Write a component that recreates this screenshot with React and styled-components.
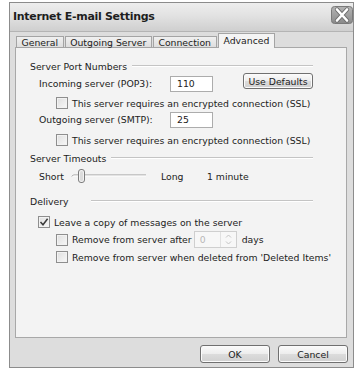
import React from "react";
import styled, { createGlobalStyle } from "styled-components";

const Global = createGlobalStyle`
  html, body { margin: 0; padding: 0; background: #ffffff; }
  body { font-family: "DejaVu Sans", Verdana, sans-serif; }
`;

const Window = styled.div`
  margin: 2px 0 0 9px;
  width: 345px;
  height: 366px;
  box-sizing: border-box;
  border: 1px solid #8c8c8c;
  background: #dddddd;
  display: flex;
  flex-direction: column;
`;

const TitleBar = styled.div`
  height: 28px;
  flex: none;
  display: flex;
  align-items: center;
  justify-content: space-between;
  padding: 0 0 0 3px;
  background: linear-gradient(#eeeeee 0%, #e2e2e2 45%, #cfcfcf 100%);
  border-bottom: 1px solid #b4b4b4;
`;

const Title = styled.div`
  font-family: "DejaVu Sans", Verdana, sans-serif;
  font-weight: bold;
  font-size: 11px;
  letter-spacing: -0.3px;
  color: #1e1e1e;
  margin-top: -2px;
`;

const CloseBtn = styled.div`
  width: 22px;
  height: 18px;
  align-self: flex-start;
  margin-top: 3px;
  display: flex;
`;

const Body = styled.div`
  flex: 1;
  display: flex;
  flex-direction: column;
  padding: 2px 6px 4px 5px;
`;

const Tabs = styled.div`
  display: flex;
  align-items: flex-end;
  gap: 1px;
  padding-left: 1px;
  height: 14px;
  position: relative;
  z-index: 1;
  margin-bottom: -1px;
`;

const Tab = styled.div`
  height: ${(p) => (p.$active ? "15px" : "12px")};
  box-sizing: border-box;
  padding: ${(p) => (p.$active ? "1px 5px 0" : "0 4.5px")};
  font-size: 9.3px;
  line-height: 11px;
  color: #222;
  border: 1px solid #a4a4a4;
  border-bottom: ${(p) => (p.$active ? "none" : "1px solid #a4a4a4")};
  background: ${(p) => (p.$active ? "#f4f4f4" : "linear-gradient(#f0f0f0, #dedede)")};
  white-space: nowrap;
`;

const Panel = styled.div`
  flex: 1;
  border: 1px solid #a8a8a8;
  background: #f3f3f3;
  padding: 11px 0 0 14px;
  display: flex;
  flex-direction: column;
  font-size: 9.3px;
  color: #222;
`;

const GroupHeader = styled.div`
  display: flex;
  align-items: center;
  height: 14px;
  width: 283px;
  margin-top: ${(p) => p.$mt || 0}px;
  &::after {
    content: "";
    flex: 1;
    margin-left: ${(p) => p.$gap || 5}px;
    border-top: 1px solid #c4c4c4;
    border-bottom: 1px solid #ffffff;
  }
`;

const Row = styled.div`
  display: flex;
  align-items: center;
  height: ${(p) => p.$h || 14}px;
  margin-top: ${(p) => p.$mt || 0}px;
  padding-left: ${(p) => p.$indent || 0}px;
  white-space: nowrap;
`;

const Label = styled.span`
  width: ${(p) => p.$w}px;
  flex: none;
  margin-left: ${(p) => p.$ml || 0}px;
`;

const TextInput = styled.div`
  width: 43px;
  height: 16px;
  box-sizing: border-box;
  border: 1px solid #acacac;
  background: #ffffff;
  padding-left: 6px;
  display: flex;
  align-items: center;
  font-size: 9.3px;
`;

const Button = styled.div`
  width: ${(p) => p.$w || 70}px;
  height: ${(p) => p.$h || 18}px;
  box-sizing: border-box;
  border: 1px solid #707070;
  border-radius: 3px;
  background: linear-gradient(#fbfbfb 0%, #ededed 48%, #dcdcdc 52%, #d0d0d0 100%);
  box-shadow: inset 0 0 0 1px #fbfbfb;
  display: flex;
  align-items: center;
  justify-content: center;
  font-size: 9.3px;
  color: #222;
  margin-left: ${(p) => p.$ml || 0}px;
  margin-top: ${(p) => p.$mt || 0}px;
`;

const Box = styled.div`
  width: 12px;
  height: 12px;
  box-sizing: border-box;
  border: 1px solid #8e8e8e;
  background: linear-gradient(135deg, #dedede, #f8f8f8);
  box-shadow: inset 0 0 0 1px #f2f2f2;
  margin-right: 4px;
  flex: none;
  display: flex;
  align-items: center;
  justify-content: center;
`;

const Check = ({ checked }) => (
  <Box>
    {checked && (
      <svg width="10" height="10" viewBox="0 0 10 10">
        <path d="M1.5 5 L4 7.8 L8.6 1.8" fill="none" stroke="#3a3a3a" strokeWidth="1.5" />
      </svg>
    )}
  </Box>
);

const SliderWrap = styled.div`
  width: 76px;
  height: 16px;
  margin-left: 7px;
  flex: none;
  display: flex;
`;

const Spinner = styled.div`
  width: 43px;
  height: 17px;
  box-sizing: border-box;
  border: 1px solid #cfcfcf;
  background: #f7f7f7;
  display: flex;
  align-items: center;
  margin: 0 5px 0 2px;
  color: #b8b8b8;
`;

const SpinValue = styled.span`
  flex: 1;
  padding-left: 5px;
`;

const SpinButtons = styled.div`
  width: 15px;
  height: 100%;
  border-left: 1px solid #e0e0e0;
  display: flex;
`;

const Footer = styled.div`
  flex: none;
  display: flex;
  justify-content: flex-end;
  padding: 7px 0 0;
  gap: 8px;
  margin-right: -1px;
`;

export default function App() {
  return (
    <>
      <Global />
      <Window>
        <TitleBar>
          <Title>Internet E-mail Settings</Title>
          <CloseBtn>
            <svg width="22" height="18" viewBox="0 0 22 18">
              <defs>
                <linearGradient id="cg" x1="0" y1="0" x2="0" y2="1">
                  <stop offset="0" stopColor="#b4b4b4" />
                  <stop offset="1" stopColor="#8a8a8a" />
                </linearGradient>
              </defs>
              <rect x="0.5" y="0.5" width="21" height="17" rx="3" fill="url(#cg)" stroke="#7a7a7a" />
              <path d="M6 3.5 L16 14.5 M16 3.5 L6 14.5" stroke="#6e6e6e" strokeWidth="4.2" strokeLinecap="round" />
              <path d="M6 3.5 L16 14.5 M16 3.5 L6 14.5" stroke="#ffffff" strokeWidth="2.6" strokeLinecap="round" />
            </svg>
          </CloseBtn>
        </TitleBar>
        <Body>
          <Tabs>
            <Tab>General</Tab>
            <Tab>Outgoing Server</Tab>
            <Tab>Connection</Tab>
            <Tab $active>Advanced</Tab>
          </Tabs>
          <Panel>
            <GroupHeader>Server Port Numbers</GroupHeader>
            <Row $h={17} $mt={2} $indent={9}>
              <Label $w={131}>Incoming server (POP3):</Label>
              <TextInput>110</TextInput>
              <Button $w={70} $h={16} $ml={30} $mt={-5}>Use Defaults</Button>
            </Row>
            <Row $mt={4} $indent={26}>
              <Check />
              This server requires an encrypted connection (SSL)
            </Row>
            <Row $h={17} $mt={1} $indent={9}>
              <Label $w={131}>Outgoing server (SMTP):</Label>
              <TextInput>25</TextInput>
            </Row>
            <Row $mt={5} $indent={26}>
              <Check />
              This server requires an encrypted connection (SSL)
            </Row>
            <GroupHeader $mt={4}>Server Timeouts</GroupHeader>
            <Row $h={16} $mt={3} $indent={9}>
              <span>Short</span>
              <SliderWrap>
                <svg width="76" height="16" viewBox="0 0 76 16">
                  <path d="M1 9 Q1 7 3 7 L75 7" fill="none" stroke="#9a9a9a" strokeWidth="1" />
                  <path d="M1 9 Q1 8 3 8 L75 8" fill="none" stroke="#ffffff" strokeWidth="1" />
                  <rect x="7.5" y="1.5" width="6" height="13" rx="2.5" fill="#f2f2f2" stroke="#7c7c7c" />
                  <rect x="9" y="3" width="3" height="10" rx="1.5" fill="#dcdcdc" />
                </svg>
              </SliderWrap>
              <Label $w={46} $ml={14}>Long</Label>
              <span>1 minute</span>
            </Row>
            <GroupHeader $mt={10} $gap={22}>Delivery</GroupHeader>
            <Row $mt={7} $indent={8}>
              <Check checked />
              Leave a copy of messages on the server
            </Row>
            <Row $h={17} $mt={2} $indent={26}>
              <Check />
              Remove from server after
              <Spinner>
                <SpinValue>0</SpinValue>
                <SpinButtons>
                  <svg width="15" height="15" viewBox="0 0 15 15">
                    <path d="M5 5.5 L7.5 3 L10 5.5" fill="none" stroke="#c4c4c4" strokeWidth="1" />
                    <path d="M5 9.5 L7.5 12 L10 9.5" fill="none" stroke="#c4c4c4" strokeWidth="1" />
                  </svg>
                </SpinButtons>
              </Spinner>
              days
            </Row>
            <Row $mt={2} $indent={26}>
              <Check />
              Remove from server when deleted from 'Deleted Items'
            </Row>
          </Panel>
          <Footer>
            <Button>OK</Button>
            <Button>Cancel</Button>
          </Footer>
        </Body>
      </Window>
    </>
  );
}
